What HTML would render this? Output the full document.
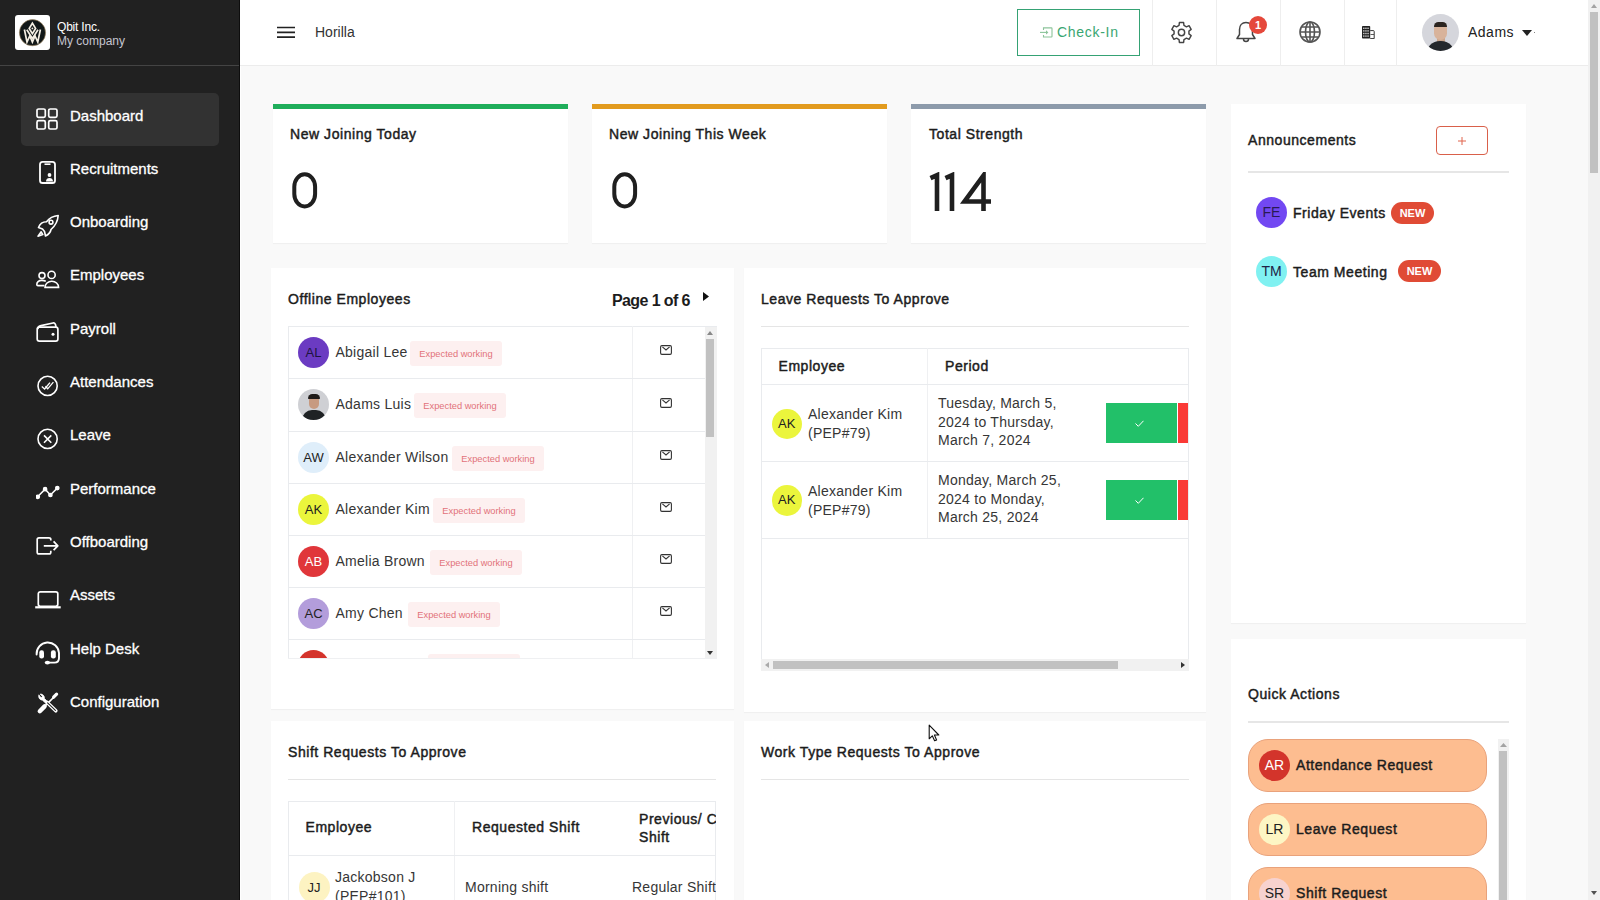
<!DOCTYPE html>
<html><head><meta charset="utf-8">
<style>
*{box-sizing:border-box;margin:0;padding:0}
html,body{width:1600px;height:900px;overflow:hidden}
body{font-family:"Liberation Sans",sans-serif;background:#f9f9f9;position:relative;color:#1c1c1c}
.abs{position:absolute}
#sb{left:0;top:0;width:240px;height:900px;background:#212121}
#sbhead{left:0;top:0;width:240px;height:66px;border-bottom:1px solid #444}
.nav{position:absolute;left:21px;width:198px;height:53px;border-radius:5px}
.nav.act{background:#323232}
.nav svg{position:absolute;left:15px;top:15px}
.nav span{position:absolute;left:49px;top:14px;font-size:15px;color:#fff;white-space:nowrap;-webkit-text-stroke:0.3px #fff}
#top{left:240px;top:0;width:1348px;height:66px;background:#fff;border-bottom:1px solid #ececec}
.sep{position:absolute;top:0;width:1px;height:66px;background:#eee}
.card{position:absolute;background:#fff;box-shadow:0 1px 1px rgba(0,0,0,0.035)}
.ttl{position:absolute;font-size:14px;font-weight:400;color:#1c1c1c;white-space:nowrap;letter-spacing:0.55px;-webkit-text-stroke:0.45px #1c1c1c}
.hr{position:absolute;height:1px;background:#e5e5e5}
.txt{position:absolute;white-space:nowrap}
.av{position:absolute;border-radius:50%;text-align:center;font-size:15px;color:#222}
.tag{position:absolute;height:26px;background:#fdf0f0;color:#e2727a;font-size:10px;border-radius:3px;line-height:26px;padding:0 10px;white-space:nowrap}
#vscroll{left:1588px;top:0;width:12px;height:900px;background:#f1f1f1}
</style></head><body>

<!-- SIDEBAR -->
<div id="sb" class="abs">
  <div id="sbhead" class="abs">
    <div class="abs" style="left:15px;top:15px;width:35px;height:35px;background:#fff;border-radius:3px">
      <svg class="abs" style="left:0;top:0" width="35" height="35" viewBox="0 0 35 35"><circle cx="17.5" cy="17.7" r="13.1" fill="#121818" stroke="#a88d63" stroke-width="0.6"/><g fill="none" stroke="#f5efe3" stroke-width="1.7" stroke-linejoin="miter"><path d="M17.4 8.2L20.6 13.4L17.4 18.6L14.2 13.4Z"/><path d="M9.4 14.5L12 27L14.8 20.8L17.4 27L20 20.8L22.8 27L25.4 14.5"/><path d="M11.8 14.8L17.4 23.4L23 14.8"/></g><circle cx="17.4" cy="13.4" r="0.9" fill="#f5efe3"/></svg>
    </div>
    <div class="txt" style="left:57px;top:20px;font-size:12px;color:#fff;letter-spacing:-0.2px">Qbit Inc.</div>
    <div class="txt" style="left:57px;top:34px;font-size:12px;color:#c5c5d0">My company</div>
  </div>
  <div class="nav act" style="top:93px">
    <svg style="left:15px;top:15px" width="22" height="22" viewBox="0 0 22 22" fill="none" stroke="#fff" stroke-width="1.7"><rect x="1" y="1" width="8.3" height="8.3" rx="1.6"/><rect x="12.7" y="1" width="8.3" height="8.3" rx="1.6"/><rect x="1" y="12.7" width="8.3" height="8.3" rx="1.6"/><rect x="12.7" y="12.7" width="8.3" height="8.3" rx="1.6"/></svg>
    <span>Dashboard</span></div>
  <div class="nav" style="top:146px">
    <svg style="left:15px;top:12px" width="24" height="26" viewBox="0 0 24 26" fill="none" stroke="#fff" stroke-width="1.8"><rect x="4" y="3.8" width="15" height="21.2" rx="2.6"/><path d="M8.5 6.2h6" stroke-width="1.6"/><circle cx="13.5" cy="17" r="1.9" fill="#fff" stroke="none"/><path d="M10 23.6c0-2.6 1.6-3.6 3.5-3.6s3.5 1 3.5 3.6z" fill="#fff" stroke="none"/></svg>
    <span>Recruitments</span></div>
  <div class="nav" style="top:199px">
    <svg style="left:15px;top:14px" width="25" height="26" viewBox="0 0 25 26" fill="none" stroke="#fff" stroke-width="1.6" stroke-linejoin="round"><path d="M22.2 2.5C17 3 13 5.5 10.5 8.8C7 8.8 4 10.5 2.5 14.5L6.5 16L8.5 18.5L9.5 23C12.5 21.5 14.5 19.5 15 16.5C19 13 21.8 8.5 22.2 2.5Z"/><circle cx="15" cy="9.2" r="1.9"/><path d="M5.2 18.8L2 23.2L6.8 21.6Z"/></svg>
    <span>Onboarding</span></div>
  <div class="nav" style="top:252px">
    <svg style="left:13px;top:16px" width="26" height="22" viewBox="0 0 26 22" fill="none" stroke="#fff" stroke-width="1.6"><circle cx="8" cy="7.6" r="3"/><circle cx="17.6" cy="6.9" r="3.6"/><path d="M11.8 13.2C10.5 12.6 9 12.4 7.8 12.4C4.5 12.4 2.8 14.5 2.8 16.4C2.8 17.2 3.2 17.6 4 17.6H10.2"/><path d="M11 19.4C11 16 14 13.2 17.8 13.2C21.5 13.2 24.6 16 24.6 19.4Z"/></svg>
    <span>Employees</span></div>
  <div class="nav" style="top:306px">
    <svg style="left:13px;top:12px" width="26" height="26" viewBox="0 0 26 26" fill="none" stroke="#fff" stroke-width="1.7" stroke-linejoin="round"><rect x="3.2" y="9.2" width="20.7" height="14" rx="2.2"/><path d="M3.6 11C4 8.8 5 8 7 7.6L19 5C20.4 4.7 21.3 5.5 21.6 7L22 9.2"/><circle cx="19" cy="16.2" r="1.5" fill="#fff" stroke="none"/></svg>
    <span>Payroll</span></div>
  <div class="nav" style="top:359px">
    <svg style="left:15px;top:15px" width="24" height="24" viewBox="0 0 24 24" fill="none" stroke="#fff" stroke-width="1.6"><circle cx="11.6" cy="11.9" r="9.6"/><path d="M5.8 12.6L8.6 15L14 8.6M9.4 12.2l2.3 2.6 5.7-6.6" stroke-width="1.3"/></svg>
    <span>Attendances</span></div>
  <div class="nav" style="top:412px">
    <svg style="left:15px;top:15px" width="24" height="24" viewBox="0 0 24 24" fill="none" stroke="#fff" stroke-width="1.6"><circle cx="11.6" cy="11.9" r="9.6"/><path d="M8 8.4l7.3 7.3M15.3 8.4L8 15.7"/></svg>
    <span>Leave</span></div>
  <div class="nav" style="top:466px">
    <svg style="left:15px;top:15px" width="24" height="20" viewBox="0 0 24 20" fill="none" stroke="#fff" stroke-width="1.5"><path d="M1.6 15.8L9.1 8.2L14.4 14L21.3 7.1"/><circle cx="1.8" cy="15.8" r="1.6" fill="#fff"/><circle cx="9.1" cy="8.2" r="1.6" fill="#fff"/><circle cx="14.4" cy="14" r="1.6" fill="#fff"/><circle cx="21.3" cy="7.1" r="1.6" fill="#fff"/></svg>
    <span>Performance</span></div>
  <div class="nav" style="top:519px">
    <svg style="left:15px;top:17px" width="24" height="20" viewBox="0 0 24 20" fill="none" stroke="#fff" stroke-width="1.7" stroke-linejoin="round"><path d="M14.8 4.5V3.5C14.8 2.4 14 1.8 13 1.8H3C1.9 1.8 1.2 2.5 1.2 3.5V16.2C1.2 17.2 1.9 17.9 3 17.9H13C14 17.9 14.8 17.2 14.8 16.2V14.8"/><path d="M7.8 9.8H21.6M17.6 5.4L21.8 9.8L17.6 14.2"/></svg>
    <span>Offboarding</span></div>
  <div class="nav" style="top:572px">
    <svg style="left:13px;top:17px" width="28" height="21" viewBox="0 0 28 21" fill="none" stroke="#fff" stroke-width="1.7"><rect x="4.3" y="2.8" width="19.5" height="14.5" rx="2"/><path d="M1.2 18.3H26.7" stroke-width="2.2"/></svg>
    <span>Assets</span></div>
  <div class="nav" style="top:626px">
    <svg style="left:13px;top:12px" width="28" height="28" viewBox="0 0 28 28" fill="none" stroke="#fff" stroke-width="1.9" stroke-linecap="round"><path d="M2.6 16.5A11.2 11.2 0 0 1 25 15V20Q25 24.6 20.4 24.6H15"/><rect x="5.3" y="12.2" width="4.7" height="8.2" rx="2.2" fill="#fff" stroke="none"/><rect x="16.9" y="12.2" width="4.9" height="8.2" rx="2.2" fill="#fff" stroke="none"/><ellipse cx="13.4" cy="24.6" rx="2.6" ry="1.9" fill="#fff" stroke="none"/></svg>
    <span>Help Desk</span></div>
  <div class="nav" style="top:679px">
    <svg style="left:15px;top:12px" width="24" height="24" viewBox="0 0 24 24" fill="none" stroke="#fff" stroke-linecap="round"><path d="M3.8 20.2L8.6 15.4" stroke-width="4.4"/><path d="M8.6 15.4L17.5 6.5" stroke-width="1.7"/><path d="M17.6 6.2L20.6 3.2" stroke-width="3.2"/><path d="M11.2 11.5L19.8 19.8" stroke-width="3.6"/><path d="M11.6 11.9L19.4 19.4" stroke="#212121" stroke-width="1.1"/><path d="M2.8 4.2C2.2 6.8 3.8 9 6.5 9.2L9.8 12.3L11.4 10.6L8.4 7.4C8.6 4.8 6.6 3 4.2 3L6.4 5.4L5.2 6.6Z" fill="#fff" stroke="#fff" stroke-width="0.8" stroke-linejoin="round"/></svg>
    <span>Configuration</span></div>
</div>

<div class="abs" style="left:239px;top:0;width:1px;height:900px;background:#0d0d0d"></div>
<div class="abs" style="left:240px;top:66px;width:1px;height:834px;background:#fff"></div>
<!-- TOPBAR -->
<div id="top" class="abs">
  <svg class="abs" style="left:37px;top:26px" width="18" height="13" viewBox="0 0 18 13"><path d="M0 1.5h18M0 6.4h18M0 11.2h18" stroke="#222" stroke-width="1.7"/></svg>
  <div class="txt" style="left:75px;top:24px;font-size:14px;color:#333">Horilla</div>
  <div class="abs" style="left:777px;top:9px;width:123px;height:47px;border:1px solid #35a274"></div>
  <svg class="abs" style="left:799px;top:27px" width="14" height="11" viewBox="0 0 14 11" fill="none" stroke="#8cc49a" stroke-width="1.1"><path d="M4.5 3V0.9h7.9q0.6 0 0.6 0.6v7.9q0 0.6-0.6 0.6H4.5V8"/><path d="M1 5.4h6"/><path d="M7 3.2L9.4 5.4 7 7.6z" fill="#8cc49a" stroke="none"/></svg>
  <div class="txt" style="left:817px;top:24px;font-size:14px;color:#3aa672;letter-spacing:0.7px">Check-In</div>
  <div class="sep" style="left:912px"></div>
  <div class="sep" style="left:976px"></div>
  <div class="sep" style="left:1040px"></div>
  <div class="sep" style="left:1104px"></div>
  <div class="sep" style="left:1156px"></div>
  <svg class="abs" style="left:930px;top:21px" width="23" height="23" viewBox="0 0 24 24" fill="none" stroke="#444" stroke-width="1.5" stroke-linejoin="round"><path d="M9.43 4.53 L9.80 1.63 L14.20 1.63 L14.57 4.53 L17.18 6.04 L19.88 4.91 L22.08 8.72 L19.75 10.49 L19.75 13.51 L22.08 15.28 L19.88 19.09 L17.18 17.96 L14.57 19.47 L14.20 22.37 L9.80 22.37 L9.43 19.47 L6.82 17.96 L4.12 19.09 L1.92 15.28 L4.25 13.51 L4.25 10.49 L1.92 8.72 L4.12 4.91 L6.82 6.04Z"/><circle cx="12" cy="12" r="3.3"/></svg>
  <svg class="abs" style="left:996px;top:21px" width="20" height="23" viewBox="0 0 20 23" fill="none" stroke="#444" stroke-width="1.5" stroke-linejoin="round"><path d="M10 1.5c-4 0-6.5 3-6.5 7v5L1 17.5h18L16.5 13.5v-5c0-4-2.5-7-6.5-7z"/><path d="M7.5 18a2.5 2.5 0 0 0 5 0"/></svg>
  <div class="abs" style="left:1009px;top:16px;width:18px;height:18px;border-radius:50%;background:#e5483b;color:#fff;font-size:11px;font-weight:700;text-align:center;line-height:18px">1</div>
  <svg class="abs" style="left:1059px;top:21px" width="22" height="22" viewBox="0 0 22 22" fill="none" stroke="#555" stroke-width="1.6"><circle cx="11" cy="11" r="10"/><ellipse cx="11" cy="11" rx="4.5" ry="10"/><path d="M11 1v20M1 11h20M2.5 6h17M2.5 16h17"/></svg>
  <svg class="abs" style="left:1122px;top:26px" width="13" height="13" viewBox="0 0 13 13"><rect x="0" y="0" width="8.2" height="12.6" rx="0.8" fill="#222"/><rect x="1.3" y="1.6" width="1.1" height="1.4" fill="#fff"/><rect x="3.4" y="1.6" width="1.1" height="1.4" fill="#fff"/><rect x="5.5" y="1.6" width="1.1" height="1.4" fill="#fff"/><rect x="1.3" y="4.2" width="1.1" height="1.4" fill="#fff"/><rect x="3.4" y="4.2" width="1.1" height="1.4" fill="#fff"/><rect x="5.5" y="4.2" width="1.1" height="1.4" fill="#fff"/><rect x="1.3" y="6.8" width="1.1" height="1.4" fill="#fff"/><rect x="3.4" y="6.8" width="1.1" height="1.4" fill="#fff"/><rect x="5.5" y="6.8" width="1.1" height="1.4" fill="#fff"/><rect x="1.3" y="9.4" width="1.1" height="1.4" fill="#fff"/><rect x="3.4" y="9.4" width="1.1" height="1.4" fill="#fff"/><rect x="5.5" y="9.4" width="1.1" height="1.4" fill="#fff"/><path d="M8.2 4.6H11.4Q12.2 4.6 12.2 5.4V12.6H8.2" fill="none" stroke="#333" stroke-width="1"/><path d="M8.5 8.5H12" stroke="#333" stroke-width="0.8"/></svg>
  <div class="abs" style="left:1182px;top:14px;width:37px;height:37px;border-radius:50%;background:#d5d6dc;overflow:hidden">
    <div class="abs" style="left:14.5px;top:22px;width:8px;height:8px;background:#c9a58c"></div>
    <div class="abs" style="left:12.3px;top:8.5px;width:12.5px;height:17px;border-radius:6px 6px 7px 7px;background:#d8b39b"></div>
    <div class="abs" style="left:12px;top:7.6px;width:13px;height:5.5px;border-radius:7px 7px 1px 1px;background:#2b2420"></div>
    <div class="abs" style="left:4px;top:27px;width:29px;height:14px;border-radius:14px 14px 0 0;background:#24282c"></div>
  </div>
  <div class="txt" style="left:1228px;top:24px;font-size:14px;color:#222;letter-spacing:0.5px">Adams</div>
  <svg class="abs" style="left:1282px;top:30px" width="10" height="7" viewBox="0 0 10 7"><path d="M0 0h10L5 6z" fill="#222"/></svg>
  <div class="abs" style="left:1294px;top:32px;width:1px;height:1px;background:#888"></div>
</div>


<!-- TOP CARDS -->
<div class="card" style="left:273px;top:104px;width:295px;height:139px;border-top:5px solid #1fae5b"></div>
<div class="ttl" style="left:290px;top:126px">New Joining Today</div>
<svg class="abs" style="left:288px;top:168px" width="34" height="45" viewBox="0 0 34 45"><rect x="6.3" y="6.3" width="20.8" height="32.2" rx="10.4" ry="12.5" fill="none" stroke="#1f1f1f" stroke-width="4"/></svg>
<div class="card" style="left:592px;top:104px;width:295px;height:139px;border-top:5px solid #e29b1e"></div>
<div class="ttl" style="left:609px;top:126px">New Joining This Week</div>
<svg class="abs" style="left:608px;top:168px" width="34" height="45" viewBox="0 0 34 45"><rect x="6.3" y="6.3" width="20.8" height="32.2" rx="10.4" ry="12.5" fill="none" stroke="#1f1f1f" stroke-width="4"/></svg>
<div class="card" style="left:911px;top:104px;width:295px;height:139px;border-top:5px solid #8d9bab"></div>
<div class="ttl" style="left:929px;top:126px">Total Strength</div>
<svg class="abs" style="left:925px;top:172px" width="70" height="42" viewBox="0 0 70 42" fill="none" stroke="#1f1f1f" stroke-width="4.6" stroke-linejoin="miter"><path d="M5.5 6.2L12 3.2V39"/><path d="M20.5 6.2L27 3.2V39"/><path d="M58.5 39V3.5L39.5 29.5H66"/></svg>

<!-- ANNOUNCEMENTS -->
<div class="card" style="left:1231px;top:104px;width:295px;height:519px"></div>
<div class="ttl" style="left:1248px;top:132px">Announcements</div>
<div class="abs" style="left:1436px;top:126px;width:52px;height:29px;border:1px solid #d9604a;border-radius:4px"></div>
<svg class="abs" style="left:1458px;top:137px" width="8" height="8" viewBox="0 0 8 8"><path d="M4 0v8M0 4h8" stroke="#e0654c" stroke-width="1"/></svg>
<div class="hr" style="left:1248px;top:171px;width:261px;height:2px;background:#e6e6e6"></div>
<div class="av" style="left:1256px;top:197px;width:31px;height:31px;line-height:31px;background:#7248f2;color:#2a1a55;font-size:14px">FE</div>
<div class="ttl" style="left:1293px;top:205px">Friday Events</div>
<div class="abs" style="left:1391px;top:202px;width:43px;height:22px;border-radius:11px;background:#e04b35;color:#fff;font-size:11px;font-weight:700;text-align:center;line-height:22px">NEW</div>
<div class="av" style="left:1256px;top:256px;width:31px;height:31px;line-height:31px;background:#80f1f1;color:#224;font-size:14px">TM</div>
<div class="ttl" style="left:1293px;top:264px">Team Meeting</div>
<div class="abs" style="left:1398px;top:260px;width:43px;height:22px;border-radius:11px;background:#e04b35;color:#fff;font-size:11px;font-weight:700;text-align:center;line-height:22px">NEW</div>

<!-- QUICK ACTIONS -->
<div class="card" style="left:1231px;top:639px;width:295px;height:270px"></div>
<div class="ttl" style="left:1248px;top:686px">Quick Actions</div>
<div class="hr" style="left:1248px;top:721px;width:261px;height:2px;background:#e6e6e6"></div>
<div class="abs" style="left:1248px;top:739px;width:239px;height:53px;border-radius:20px;background:#fdbd90;border:1px solid #e9a27b"></div>
<div class="av" style="left:1259px;top:750px;width:31px;height:31px;line-height:31px;background:#d3342b;color:#fff;font-size:14px">AR</div>
<div class="ttl" style="left:1296px;top:757px">Attendance Request</div>
<div class="abs" style="left:1248px;top:803px;width:239px;height:53px;border-radius:20px;background:#fdbd90;border:1px solid #e9a27b"></div>
<div class="av" style="left:1259px;top:814px;width:31px;height:31px;line-height:31px;background:#fdf6c4;color:#222;font-size:14px">LR</div>
<div class="ttl" style="left:1296px;top:821px">Leave Request</div>
<div class="abs" style="left:1248px;top:867px;width:239px;height:53px;border-radius:20px;background:#fdbd90;border:1px solid #e9a27b"></div>
<div class="av" style="left:1259px;top:878px;width:31px;height:31px;line-height:31px;background:#f7d2cf;color:#222;font-size:14px">SR</div>
<div class="ttl" style="left:1296px;top:885px">Shift Request</div>
<div class="abs" style="left:1498px;top:739px;width:11px;height:170px;background:#f1f1f1">
  <div class="abs" style="left:1px;top:12px;width:8px;height:170px;background:#c1c1c1"></div>
  <svg class="abs" style="left:2px;top:4px" width="7" height="4" viewBox="0 0 7 4"><path d="M0 4h7L3.5 0z" fill="#a3a3a3"/></svg>
</div>

<!-- OFFLINE EMPLOYEES -->
<div class="card" style="left:271px;top:268px;width:463px;height:441px"></div>
<div class="ttl" style="left:288px;top:291px">Offline Employees</div>
<div class="txt" style="left:612px;top:292px;font-size:16px;font-weight:700;color:#1c1c1c;letter-spacing:-0.6px">Page 1 of 6</div>
<svg class="abs" style="left:703px;top:292px" width="6" height="9" viewBox="0 0 6 9"><path d="M0 0l6 4.5L0 9z" fill="#111"/></svg>
<div class="abs" id="offtbl" style="left:288px;top:326px;width:429px;height:333px;overflow:hidden">
<div class="abs" style="left:0;top:0;width:429px;height:1px;background:#e9ebee"></div>
<div class="abs" style="left:0;top:0;width:1px;height:333px;background:#e9ebee"></div>
<div class="abs" style="left:344px;top:0;width:1px;height:333px;background:#eff0f2"></div>
<div class="abs" style="left:0;top:52px;width:417px;height:1px;background:#e9ebee"></div>
<div class="abs" style="left:0;top:105px;width:417px;height:1px;background:#e9ebee"></div>
<div class="abs" style="left:0;top:157px;width:417px;height:1px;background:#e9ebee"></div>
<div class="abs" style="left:0;top:209px;width:417px;height:1px;background:#e9ebee"></div>
<div class="abs" style="left:0;top:261px;width:417px;height:1px;background:#e9ebee"></div>
<div class="abs" style="left:0;top:313px;width:417px;height:1px;background:#e9ebee"></div>
<div class="av" style="left:10px;top:10.5px;width:31px;height:31px;line-height:31px;background:#6b3bc2;color:#1e1440;font-size:13px">AL</div>
<div class="txt" style="left:47.5px;top:17.8px;font-size:14px;color:#363636;letter-spacing:0.25px">Abigail Lee</div>
<div class="tag" style="left:122px;top:14.5px;width:92px;height:25px;line-height:27px;font-size:9.3px;padding:0;text-align:center">Expected working</div>
<svg class="abs" style="left:372px;top:19px" width="12" height="10" viewBox="0 0 12 10" fill="none" stroke="#333" stroke-width="1.1"><rect x="0.6" y="0.6" width="10.8" height="8.8" rx="1.3"/><path d="M2.4 1.8L6 5l3.6-3.2"/></svg>
<div class="abs" style="left:10px;top:63.0px;width:31px;height:31px;border-radius:50%;background:#cfd0d4;overflow:hidden">
<div class="abs" style="left:11px;top:6px;width:10px;height:14px;border-radius:5px 5px 6px 6px;background:#c79a80"></div>
<div class="abs" style="left:10px;top:5px;width:12px;height:5px;border-radius:6px 6px 1px 1px;background:#1e1a18"></div>
<div class="abs" style="left:4px;top:21px;width:24px;height:12px;border-radius:10px 10px 0 0;background:#1f2224"></div></div>
<div class="txt" style="left:47.5px;top:70.3px;font-size:14px;color:#363636;letter-spacing:0.25px">Adams Luis</div>
<div class="tag" style="left:126px;top:67.0px;width:92px;height:25px;line-height:27px;font-size:9.3px;padding:0;text-align:center">Expected working</div>
<svg class="abs" style="left:372px;top:71.5px" width="12" height="10" viewBox="0 0 12 10" fill="none" stroke="#333" stroke-width="1.1"><rect x="0.6" y="0.6" width="10.8" height="8.8" rx="1.3"/><path d="M2.4 1.8L6 5l3.6-3.2"/></svg>
<div class="av" style="left:10px;top:115.5px;width:31px;height:31px;line-height:31px;background:#dfeefa;color:#222;font-size:13px">AW</div>
<div class="txt" style="left:47.5px;top:122.8px;font-size:14px;color:#363636;letter-spacing:0.25px">Alexander Wilson</div>
<div class="tag" style="left:164px;top:119.5px;width:92px;height:25px;line-height:27px;font-size:9.3px;padding:0;text-align:center">Expected working</div>
<svg class="abs" style="left:372px;top:124px" width="12" height="10" viewBox="0 0 12 10" fill="none" stroke="#333" stroke-width="1.1"><rect x="0.6" y="0.6" width="10.8" height="8.8" rx="1.3"/><path d="M2.4 1.8L6 5l3.6-3.2"/></svg>
<div class="av" style="left:10px;top:167.5px;width:31px;height:31px;line-height:31px;background:#ebf53c;color:#222;font-size:13px">AK</div>
<div class="txt" style="left:47.5px;top:174.8px;font-size:14px;color:#363636;letter-spacing:0.25px">Alexander Kim</div>
<div class="tag" style="left:145px;top:171.5px;width:92px;height:25px;line-height:27px;font-size:9.3px;padding:0;text-align:center">Expected working</div>
<svg class="abs" style="left:372px;top:176px" width="12" height="10" viewBox="0 0 12 10" fill="none" stroke="#333" stroke-width="1.1"><rect x="0.6" y="0.6" width="10.8" height="8.8" rx="1.3"/><path d="M2.4 1.8L6 5l3.6-3.2"/></svg>
<div class="av" style="left:10px;top:219.5px;width:31px;height:31px;line-height:31px;background:#e0363a;color:#fff;font-size:13px">AB</div>
<div class="txt" style="left:47.5px;top:226.8px;font-size:14px;color:#363636;letter-spacing:0.25px">Amelia Brown</div>
<div class="tag" style="left:142px;top:223.5px;width:92px;height:25px;line-height:27px;font-size:9.3px;padding:0;text-align:center">Expected working</div>
<svg class="abs" style="left:372px;top:228px" width="12" height="10" viewBox="0 0 12 10" fill="none" stroke="#333" stroke-width="1.1"><rect x="0.6" y="0.6" width="10.8" height="8.8" rx="1.3"/><path d="M2.4 1.8L6 5l3.6-3.2"/></svg>
<div class="av" style="left:10px;top:271.5px;width:31px;height:31px;line-height:31px;background:#b39ddb;color:#222;font-size:13px">AC</div>
<div class="txt" style="left:47.5px;top:278.8px;font-size:14px;color:#363636;letter-spacing:0.25px">Amy Chen</div>
<div class="tag" style="left:120px;top:275.5px;width:92px;height:25px;line-height:27px;font-size:9.3px;padding:0;text-align:center">Expected working</div>
<svg class="abs" style="left:372px;top:280px" width="12" height="10" viewBox="0 0 12 10" fill="none" stroke="#333" stroke-width="1.1"><rect x="0.6" y="0.6" width="10.8" height="8.8" rx="1.3"/><path d="M2.4 1.8L6 5l3.6-3.2"/></svg>
<div class="av" style="left:10px;top:323.5px;width:31px;height:31px;line-height:31px;background:#d4342c;color:#fff;font-size:13px">MR</div>
<div class="txt" style="left:47.5px;top:330.8px;font-size:14px;color:#363636;letter-spacing:0.25px">Michael Ross</div>
<div class="tag" style="left:140px;top:327.5px;width:92px;height:25px;line-height:27px;font-size:9.3px;padding:0;text-align:center">Expected working</div>
<svg class="abs" style="left:372px;top:332px" width="12" height="10" viewBox="0 0 12 10" fill="none" stroke="#333" stroke-width="1.1"><rect x="0.6" y="0.6" width="10.8" height="8.8" rx="1.3"/><path d="M2.4 1.8L6 5l3.6-3.2"/></svg>
<div class="abs" style="left:417px;top:1px;width:12px;height:332px;background:#f1f1f1"></div>
<div class="abs" style="left:0;top:332px;width:429px;height:1px;background:#eff0f2"></div>
<div class="abs" style="left:418px;top:13px;width:8px;height:98px;background:#c1c1c1"></div>
<svg class="abs" style="left:419px;top:5px" width="6" height="4" viewBox="0 0 6 4"><path d="M0 4h6L3 0z" fill="#888"/></svg>
<svg class="abs" style="left:419px;top:325px" width="6" height="4" viewBox="0 0 6 4"><path d="M0 0h6L3 4z" fill="#333"/></svg>
</div>

<!-- LEAVE REQUESTS -->
<div class="card" style="left:744px;top:268px;width:462px;height:444px"></div>
<div class="ttl" style="left:761px;top:291px">Leave Requests To Approve</div>
<div class="hr" style="left:761px;top:326px;width:428px"></div>
<div class="abs" id="lvtbl" style="left:761px;top:348px;width:428px;height:323px;overflow:hidden">
<div class="abs" style="left:0;top:0;width:428px;height:1px;background:#e9ebee"></div>
<div class="abs" style="left:0;top:0;width:1px;height:323px;background:#e9ebee"></div>
<div class="abs" style="left:427px;top:0;width:1px;height:323px;background:#e9ebee"></div>
<div class="abs" style="left:166px;top:0;width:1px;height:190px;background:#eff0f2"></div>
<div class="abs" style="left:0;top:36px;width:428px;height:1px;background:#e9ebee"></div>
<div class="abs" style="left:0;top:113px;width:428px;height:1px;background:#e9ebee"></div>
<div class="abs" style="left:0;top:190px;width:428px;height:1px;background:#e9ebee"></div>
<div class="txt" style="left:17.5px;top:10px;font-size:14px;color:#1c1c1c;letter-spacing:0.55px;-webkit-text-stroke:0.45px #1c1c1c">Employee</div>
<div class="txt" style="left:184px;top:10px;font-size:14px;color:#1c1c1c;letter-spacing:0.55px;-webkit-text-stroke:0.45px #1c1c1c">Period</div>
<div class="av" style="left:10.5px;top:60.5px;width:30.5px;height:30.5px;line-height:30.5px;background:#ebf53c;color:#222;font-size:13px">AK</div>
<div class="txt" style="left:47px;top:57.3px;font-size:14px;line-height:19px;color:#363636;letter-spacing:0.25px">Alexander Kim<br>(PEP#79)</div>
<div class="txt" style="left:177px;top:46.3px;font-size:14px;line-height:18.5px;color:#363636;letter-spacing:0.25px">Tuesday, March 5,<br>2024 to Thursday,<br>March 7, 2024</div>
<div class="abs" style="left:345px;top:54.8px;width:71px;height:40px;background:#22c069"></div>
<svg class="abs" style="left:374px;top:71.8px" width="9" height="7" viewBox="0 0 9 7" fill="none" stroke="#fff" stroke-width="1"><path d="M0.5 3.5l2.8 2.8L8.5 0.8"/></svg>
<div class="abs" style="left:417px;top:54.8px;width:10px;height:40px;background:#fa3a36"></div>
<div class="av" style="left:10.5px;top:137.2px;width:30.5px;height:30.5px;line-height:30.5px;background:#ebf53c;color:#222;font-size:13px">AK</div>
<div class="txt" style="left:47px;top:134.0px;font-size:14px;line-height:19px;color:#363636;letter-spacing:0.25px">Alexander Kim<br>(PEP#79)</div>
<div class="txt" style="left:177px;top:123.0px;font-size:14px;line-height:18.5px;color:#363636;letter-spacing:0.25px">Monday, March 25,<br>2024 to Monday,<br>March 25, 2024</div>
<div class="abs" style="left:345px;top:131.5px;width:71px;height:40px;background:#22c069"></div>
<svg class="abs" style="left:374px;top:148.5px" width="9" height="7" viewBox="0 0 9 7" fill="none" stroke="#fff" stroke-width="1"><path d="M0.5 3.5l2.8 2.8L8.5 0.8"/></svg>
<div class="abs" style="left:417px;top:131.5px;width:10px;height:40px;background:#fa3a36"></div>
<div class="abs" style="left:0;top:311px;width:428px;height:12px;background:#f1f1f1"></div>
<div class="abs" style="left:12px;top:313px;width:345px;height:8px;background:#c1c1c1"></div>
<svg class="abs" style="left:4px;top:314px" width="4" height="6" viewBox="0 0 4 6"><path d="M4 0v6L0 3z" fill="#aaa"/></svg>
<svg class="abs" style="left:420px;top:314px" width="4" height="6" viewBox="0 0 4 6"><path d="M0 0v6L4 3z" fill="#333"/></svg>
</div>

<!-- SHIFT REQUESTS -->
<div class="card" style="left:271px;top:721px;width:463px;height:200px"></div>
<div class="ttl" style="left:288px;top:744px">Shift Requests To Approve</div>
<div class="hr" style="left:288px;top:779px;width:428px"></div>
<div class="abs" id="shtbl" style="left:288px;top:801px;width:428px;height:120px;overflow:hidden">
<div class="abs" style="left:0;top:0;width:428px;height:1px;background:#e9ebee"></div>
<div class="abs" style="left:0;top:0;width:1px;height:120px;background:#e9ebee"></div>
<div class="abs" style="left:166px;top:0;width:1px;height:120px;background:#eff0f2"></div>
<div class="abs" style="left:0;top:54px;width:428px;height:1px;background:#e9ebee"></div>
<div class="abs" style="left:427px;top:0;width:1px;height:120px;background:#e9ebee"></div>
<div class="txt" style="left:17.5px;top:18px;font-size:14px;color:#1c1c1c;letter-spacing:0.55px;-webkit-text-stroke:0.45px #1c1c1c">Employee</div>
<div class="txt" style="left:184px;top:18px;font-size:14px;color:#1c1c1c;letter-spacing:0.55px;-webkit-text-stroke:0.45px #1c1c1c">Requested Shift</div>
<div class="txt" style="left:351px;top:9px;font-size:14px;line-height:18px;color:#1c1c1c;letter-spacing:0.55px;-webkit-text-stroke:0.45px #1c1c1c">Previous/ Current<br>Shift</div>
<div class="av" style="left:10.5px;top:71px;width:31px;height:31px;line-height:31px;background:#fdf3c2;color:#222;font-size:13px">JJ</div>
<div class="txt" style="left:47px;top:67px;font-size:14px;line-height:19px;color:#363636;letter-spacing:0.25px">Jackobson J<br>(PEP#101)</div>
<div class="txt" style="left:177px;top:78px;font-size:14px;color:#363636;letter-spacing:0.25px">Morning shift</div>
<div class="txt" style="left:344px;top:78px;font-size:14px;color:#363636;letter-spacing:0.25px">Regular Shift</div>
</div>

<!-- WORK TYPE -->
<div class="card" style="left:744px;top:721px;width:462px;height:200px"></div>
<div class="ttl" style="left:761px;top:744px">Work Type Requests To Approve</div>
<div class="hr" style="left:761px;top:779px;width:428px"></div>

<svg class="abs" style="left:928px;top:724px" width="12" height="18" viewBox="0 0 12 18"><path d="M1.2 1.2v13.6l3.1-3 2.3 5 2-0.9-2.2-4.9h4.4z" fill="#fff" stroke="#111" stroke-width="1.1" stroke-linejoin="round"/></svg>
<div id="vscroll" class="abs">
  <div class="abs" style="left:2px;top:12px;width:8px;height:161px;background:#c1c1c1"></div>
  <svg class="abs" style="left:3px;top:4px" width="6" height="4" viewBox="0 0 6 4"><path d="M0 4h6L3 0z" fill="#a3a3a3"/></svg>
  <svg class="abs" style="left:3px;top:891px" width="6" height="4" viewBox="0 0 6 4"><path d="M0 0h6L3 4z" fill="#505050"/></svg>
</div>

</body></html>
